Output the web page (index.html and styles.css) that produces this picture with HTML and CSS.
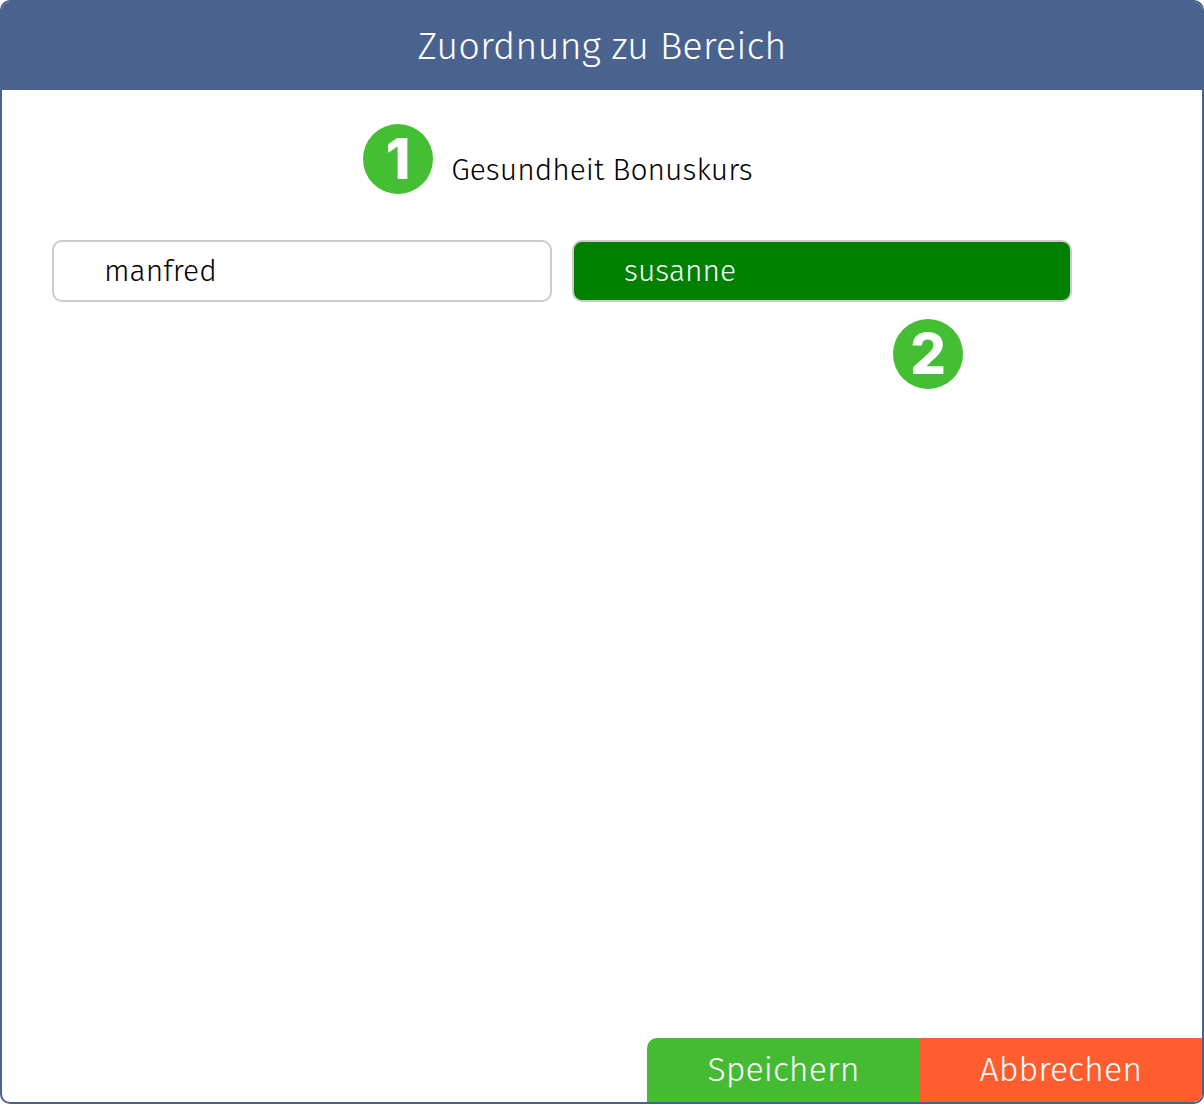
FILE: index.html
```html
<!DOCTYPE html>
<html lang="de">
<head>
  <meta charset="UTF-8">
  <meta name="viewport" content="width=device-width, initial-scale=1.0">
  <title>Zuordnung zu Bereich</title>
  <link rel="stylesheet" href="styles.css">
</head>
<body>
  <div class="dialog" role="dialog" aria-labelledby="dialog-title">
    <h1 class="dialog-header" id="dialog-title">Zuordnung zu Bereich</h1>

    <div class="dialog-content">
      <h2 class="course">
        Gesundheit Bonuskurs
        <span class="badge badge-course">1</span>
      </h2>

      <div class="users">
        <div class="user">
          <button type="button" class="user-button" aria-pressed="false">manfred</button>
        </div>
        <div class="user">
          <button type="button" class="user-button selected" aria-pressed="true">susanne</button>
          <span class="badge badge-user">2</span>
        </div>
      </div>
    </div>

    <div class="dialog-footer">
      <button type="button" class="button save">Speichern</button>
      <button type="button" class="button cancel">Abbrechen</button>
    </div>
  </div>
</body>
</html>
```
FILE: styles.css
```css
* {
  margin: 0;
  padding: 0;
  box-sizing: border-box;
}

body {
  font-family: 'Fira Sans', 'Noto Sans', sans-serif;
  font-weight: 350;
  font-size: 30px;
  line-height: 40px;
  color: #000;
  background-color: #fff;
}

button {
  font: inherit;
  cursor: pointer;
}

.dialog {
  display: flex;
  flex-direction: column;
  min-height: 100vh;
  border: 2px solid #4a628e;
  border-radius: 10px;
  background-color: #fff;
  overflow: hidden;
}

.dialog-header {
  padding: 19px 20px;
  background-color: #4a628e;
  color: #fff;
  font-size: 38px;
  font-weight: inherit;
  line-height: 50px;
  text-align: center;
}

.dialog-content {
  flex: 1;
  padding: 60px 50px;
}

.course {
  position: relative;
  width: fit-content;
  margin: 0 auto 50px;
  font-size: 30px;
  font-weight: inherit;
}

/* Users */
.users {
  display: flex;
  flex-wrap: wrap;
  gap: 20px;
}

.user {
  position: relative;
  width: 500px;
}

.user-button {
  width: 100%;
  padding: 9px 50px;
  border: 2px solid #ccc;
  border-radius: 10px;
  background-color: #fff;
  color: #000;
  text-align: left;
}

.user-button.selected {
  background-color: #008000;
  color: #fff;
}

/* Numbered markers */
.badge {
  position: absolute;
  width: 70px;
  height: 70px;
  border-radius: 50%;
  background-color: #44be32;
  color: #fff;
  font-family: Inter, sans-serif;
  font-size: 56px;
  font-weight: 800;
  line-height: 70px;
  text-align: center;
}

.badge-course {
  right: 100%;
  bottom: -4px;
  margin-right: 18px;
}

.badge-user {
  top: 100%;
  right: 109px;
  margin-top: 17px;
}

/* Footer */
.dialog-footer {
  display: flex;
  justify-content: flex-end;
}

.button {
  padding: 12px 60px;
  border: none;
  color: #fff;
  font-size: 34px;
}

.save {
  border-top-left-radius: 10px;
  background-color: #44bb33;
}

.cancel {
  background-color: #ff5c30;
}
```
